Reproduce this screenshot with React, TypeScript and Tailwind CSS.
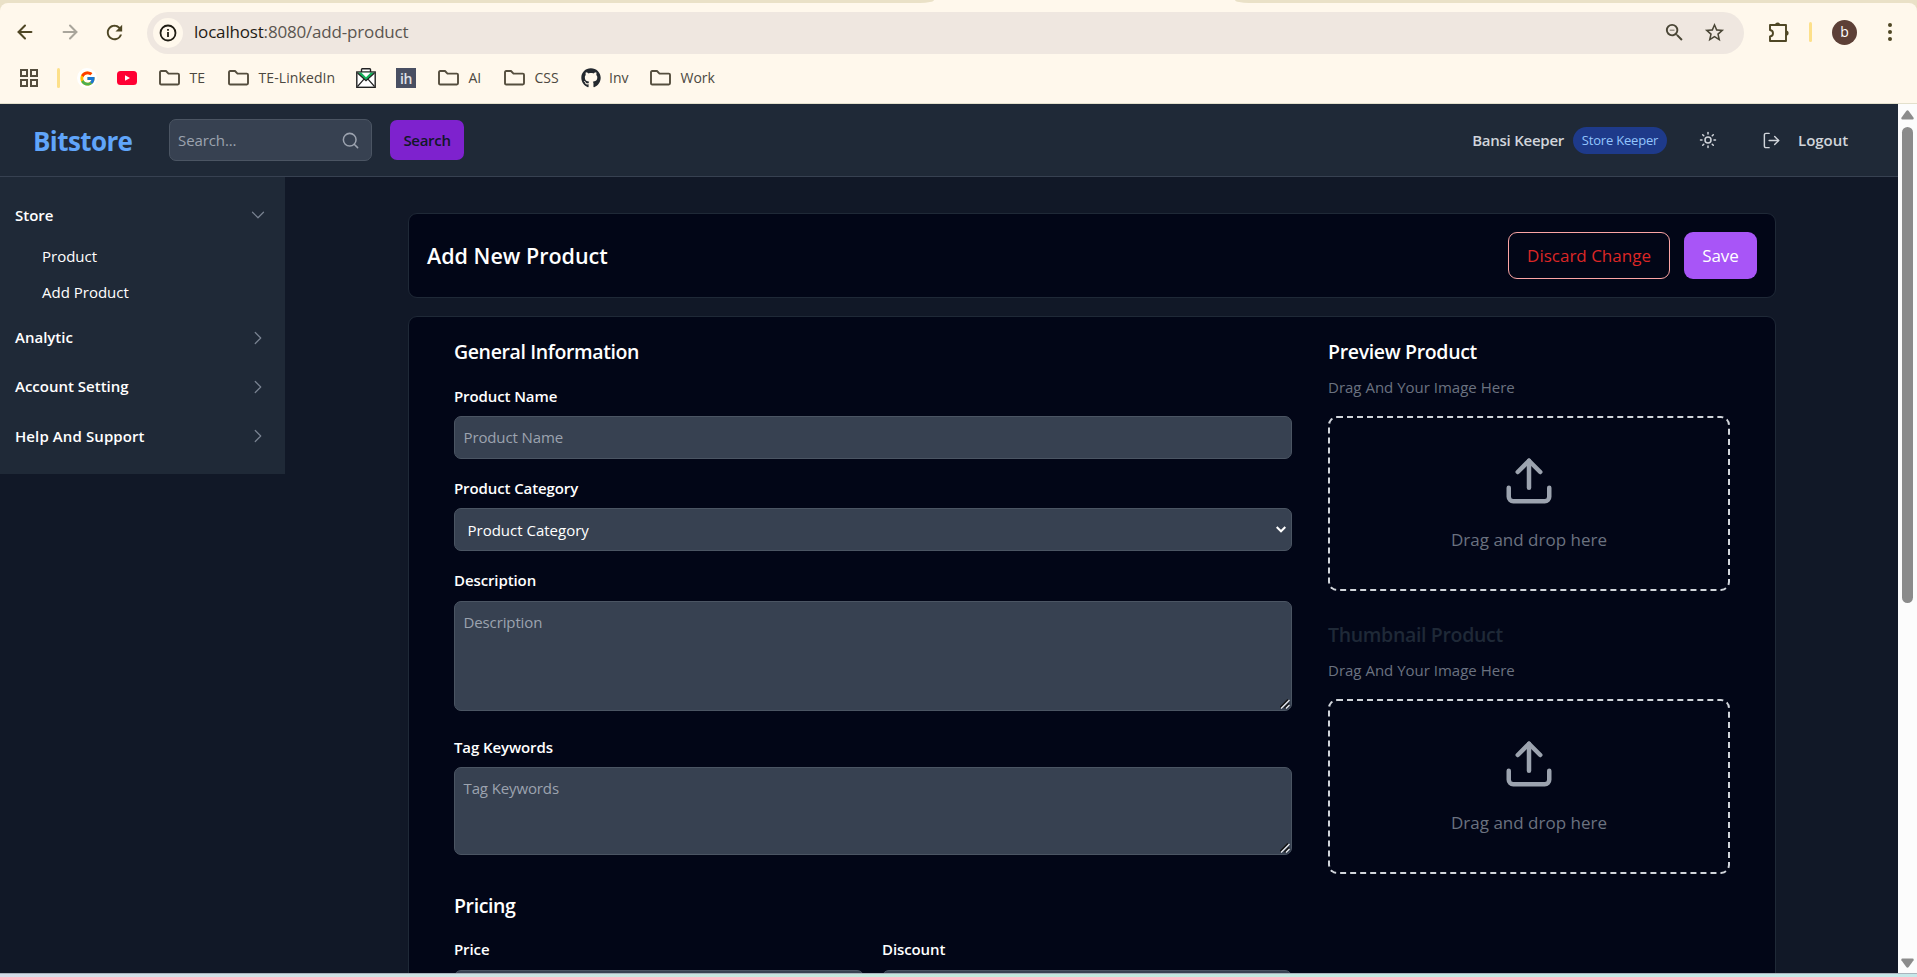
import React from "react";
import { ArrowLeft, ArrowRight, ChevronDown, ChevronRight, LogOut, Search, Sun, Upload } from "lucide-react";
import { FcGoogle } from "react-icons/fc";
import { FaGithub } from "react-icons/fa";
import { MdRefresh, MdZoomOut, MdStarBorder } from "react-icons/md";

function FolderIcon() {
  return (
    <svg width="21" height="16" viewBox="0 0 21 16" fill="none" stroke="#554e3e" strokeWidth="1.9" strokeLinejoin="round" className="shrink-0">
      <path d="M1 2.2Q1 1 2.2 1H7L9.5 3.6H18.8Q20 3.6 20 4.8V13.3Q20 14.5 18.8 14.5H2.2Q1 14.5 1 13.3Z" />
    </svg>
  );
}

function Folder({ label, className }: { label: string; className: string }) {
  return (
    <div className={`flex shrink-0 items-center gap-[9.5px] ${className}`}>
      <FolderIcon />
      <span className="pb-[2px] whitespace-nowrap">{label}</span>
    </div>
  );
}

function BrowserBar() {
  return (
    <div className="h-[104px] shrink-0 bg-[#eae1c7]">
      <div className="flex h-[3px] justify-between bg-[#fff8ec]">
        <div className="h-[3px] w-[934px] rounded-br-[14px_3px] bg-[#eae1c7]" />
        <div className="h-[3px] w-[682px] rounded-bl-[14px_3px] bg-[#eae1c7]" />
      </div>
      <div className="h-[101px] rounded-t-[8px] border-b border-[#e3e0cc] bg-[#fff8ec]">
        <div className="flex h-[58px] items-center">
          <ArrowLeft size={22} strokeWidth={2.2} color="#4f4725" className="ml-[14px] shrink-0" />
          <ArrowRight size={22} strokeWidth={2.2} color="#a9a59b" className="ml-[23px] shrink-0" />
          <MdRefresh size={23} color="#4f4725" className="ml-[22px] shrink-0" />
          <div className="mt-[1px] ml-[21px] flex h-[42px] w-[1597px] items-center rounded-full bg-[#efe7e0] pl-[6px]">
            <div className="flex size-[30px] shrink-0 items-center justify-center rounded-full bg-[#fff8ec]">
              <svg width="18" height="18" viewBox="0 0 18 18" fill="none" stroke="#1f1c13" strokeWidth="1.8">
                <circle cx="9" cy="9" r="7.5" />
                <path d="M9 8v5M9 5v1.8" />
              </svg>
            </div>
            <div className="ml-[11px] pb-[1px] text-[17px] tracking-[-0.18px] text-[#5b5650]">
              <span className="text-[#1f1b16]">localhost</span>:8080/add-product
            </div>
            <MdZoomOut size={23} color="#4a4636" className="ml-auto shrink-0" />
            <MdStarBorder size={23} color="#4a4636" className="mr-[18px] ml-[17px] shrink-0" />
          </div>
          <svg width="22" height="22" viewBox="0 0 22 22" fill="none" stroke="#4f4725" strokeWidth="1.9" strokeLinejoin="round" className="ml-[24px] shrink-0">
            <path d="M2 4H18V20H2V15.5C6 15 6 9.500 2 9Z" />
            <path d="M7 4a2.600 2.600 0 0 1 5.200 0ZM18 9.400a2.600 2.600 0 0 1 0 5.200Z" fill="#4f4725" stroke="none" />
          </svg>
          <div className="ml-[19px] h-5 w-[3px] rounded-full bg-[#fde08a]" />
          <div className="ml-[20px] flex size-[25px] items-center justify-center rounded-full bg-[#5d4037] pb-[1px] text-[14px] text-white">b</div>
          <div className="ml-[31px] flex flex-col gap-[3px]">
            <div className="size-1 rounded-full bg-[#4f4725]" />
            <div className="size-1 rounded-full bg-[#4f4725]" />
            <div className="size-1 rounded-full bg-[#4f4725]" />
          </div>
        </div>
        <div className="flex h-[34px] items-center text-[14px] text-[#4c4840]">
          <svg width="18" height="18" viewBox="0 0 18 18" fill="none" stroke="#554e3e" strokeWidth="2" className="ml-5 shrink-0">
            <path d="M1 1H7V7H1ZM11 1H17V7H11ZM1 11H7V17H1ZM11 11H17V17H11Z" />
          </svg>
          <div className="ml-[19px] h-5 w-[3px] shrink-0 rounded-full bg-[#fde08a]" />
          <div className="ml-[17px] flex size-5 shrink-0 items-center justify-center rounded-full bg-white">
            <FcGoogle size={17} />
          </div>
          <svg width="20" height="14" viewBox="0 0 20 14" className="ml-[20px] shrink-0">
            <rect width="20" height="14" rx="3.500" fill="#ff0033" />
            <path d="M8 4.200V9.800L13 7Z" fill="#fff" />
          </svg>
          <Folder label="TE" className="ml-[22px] w-[69px]" />
          <Folder label="TE-LinkedIn" className="w-[128px] tracking-[0.1px]" />
          <svg width="20" height="20" viewBox="0 0 20 20" className="shrink-0">
            <path d="M5.500 4V1.500Q5.500 .7 6.300 .7H13.700Q14.500 .7 14.500 1.500V4" fill="#fff" stroke="#222" strokeWidth="1.400" />
            <rect x=".8" y="4" width="18.400" height="15.300" fill="#fff" stroke="#222" strokeWidth="1.400" />
            <path d="M1.500 4.700H18.500L10 12.500Z" fill="#12b35a" />
            <path d="M5.500 4.700H14.500L10 9.200Z" fill="#fff" />
            <path d="M1.500 5L10 12.800L18.500 5M1.500 18.500L8 11.200M18.500 18.500L12 11.200" stroke="#222" strokeWidth="1.200" fill="none" />
          </svg>
          <div className="ml-5 flex size-5 shrink-0 items-center justify-center bg-[#494f62] text-[14px] font-semibold tracking-[-0.3px] text-[#dfe1e6]">ih</div>
          <Folder label="AI" className="ml-[22px] w-[66px]" />
          <Folder label="CSS" className="w-[77px]" />
          <FaGithub size={20} color="#24292f" className="shrink-0" />
          <span className="ml-[8px] w-[41px] pb-[2px]">Inv</span>
          <Folder label="Work" className="" />
        </div>
      </div>
    </div>
  );
}

function Header() {
  return (
    <header className="flex h-[73px] shrink-0 items-center border-b border-[#374151] bg-[#1f2937]">
      <div className="w-[135px] pt-[3px] pl-[33px] text-[26px] font-bold tracking-[-0.6px] text-[#60a5fa]">Bitstore</div>
      <div className="ml-[34px] flex h-[42px] w-[203px] items-center justify-between rounded-[7px] border border-[#4b5563] bg-[#374151] pr-[11px] pl-[8px]">
        <input placeholder="Search..." className="w-[140px] bg-transparent text-[15px] tracking-[-0.1px] outline-none placeholder:text-[#9ca3af]" />
        <Search size={19} strokeWidth={1.9} color="#9ca3af" />
      </div>
      <button className="ml-[18px] h-10 w-[74px] rounded-[7px] bg-[#7e22ce] text-[15px] font-semibold tracking-[-0.3px] text-[#111827]">Search</button>
      <div className="ml-auto text-[15px] font-semibold tracking-[-0.25px] text-[#d1d5db]">Bansi Keeper</div>
      <div className="ml-[9px] flex h-[27px] w-[94px] items-center justify-center rounded-full bg-[#1e3a8a] pt-[2px] text-[13px] tracking-[-0.2px] text-[#93c5fd]">Store Keeper</div>
      <Sun size={18} color="#d1d5db" className="ml-[32px]" />
      <LogOut size={19} strokeWidth={1.8} color="#d1d5db" className="ml-[45px]" />
      <div className="mr-[48px] ml-[17px] w-[52px] text-[15px] font-semibold text-[#d1d5db]">Logout</div>
    </header>
  );
}

function Sidebar() {
  return (
    <aside className="h-[297px] w-[285px] shrink-0 bg-[#1f2937] pt-[18px] pr-[16px] pl-[15px] text-[15px] text-white">
      <div className="flex h-[40px] items-center justify-between font-semibold">
        <span>Store</span>
        <ChevronDown size={22} strokeWidth={1.3} color="#7a8392" />
      </div>
      <div className="mt-[3px] flex h-9 items-center pl-[27px]">Product</div>
      <div className="flex h-9 items-center pl-[27px]">Add Product</div>
      <div className="mt-[3px] flex h-[49px] items-center justify-between font-semibold">
        <span>Analytic</span>
        <ChevronRight size={22} strokeWidth={1.3} color="#7a8392" />
      </div>
      <div className="flex h-[49px] items-center justify-between font-semibold">
        <span>Account Setting</span>
        <ChevronRight size={22} strokeWidth={1.3} color="#7a8392" />
      </div>
      <div className="flex h-[50px] items-center justify-between font-semibold">
        <span className="tracking-[0.1px]">Help And Support</span>
        <ChevronRight size={22} strokeWidth={1.3} color="#7a8392" />
      </div>
    </aside>
  );
}

function Label({ children }: { children: React.ReactNode }) {
  return <label className="block h-[24px] text-[15px] leading-[24px] font-semibold tracking-[-0.1px] text-white">{children}</label>;
}

function Dropzone() {
  return (
    <div className="flex h-[175px] w-[402px] flex-col items-center rounded-[9px] border-2 border-dashed border-[#d1d5db] pt-[36px]">
      <Upload size={54} color="#9ca3af" />
      <p className="mt-[19px] text-[17px] leading-[26px] text-[#6b7280]">Drag and drop here</p>
    </div>
  );
}

const field = "block w-full rounded-[7px] border border-[#4b5563] bg-[#374151] px-[8.5px] text-[15px] tracking-[-0.12px] text-white outline-none placeholder:text-[#9ca3af]";

function TextArea({ placeholder, className }: { placeholder: string; className: string }) {
  return (
    <div className="mt-[8px] grid">
      <textarea placeholder={placeholder} className={`col-start-1 row-start-1 resize-none pt-[9px] ${className} ${field}`} />
      <svg width="10" height="10" viewBox="0 0 10 10" fill="none" className="pointer-events-none col-start-1 row-start-1 mr-[2px] mb-[2px] self-end justify-self-end">
        <path d="M0 8.500L8 .5M4.500 9L9 4.500" stroke="#111" strokeWidth="1.500" />
        <path d="M1 9.500L9.500 1M6 9.500L9.500 6" stroke="#e5e7eb" strokeWidth="1.300" />
      </svg>
    </div>
  );
}

function ProductForm() {
  return (
    <section className="mt-[18px] flex h-[760px] w-[1368px] shrink-0 rounded-[9px] border border-[#1f2937] bg-[#020617] pt-[20px] pl-[45px]">
      <div className="w-[838px]">
        <h2 className="h-[30px] text-[19.500px] leading-[30px] font-semibold tracking-[-0.38px] text-white">General Information</h2>
        <div className="mt-[17px]">
          <Label>Product Name</Label>
          <input placeholder="Product Name" className={`mt-[8px] h-[43px] pb-[2px] ${field}`} />
        </div>
        <div className="mt-[17px]">
          <Label>Product Category</Label>
          <div className="mt-[8px] grid items-center">
            <select className="col-start-1 row-start-1 h-[43px] w-full appearance-none rounded-[7px] border border-[#4b5563] bg-[#374151] pt-[1px] pl-[12.5px] text-[15px] text-white outline-none">
              <option>Product Category</option>
            </select>
            <svg width="10" height="7" viewBox="0 0 10 7" fill="none" stroke="#fff" strokeWidth="2" className="pointer-events-none col-start-1 row-start-1 mr-[6px] justify-self-end">
              <path d="M.7 1L5 5.300L9.300 1" />
            </svg>
          </div>
        </div>
        <div className="mt-[17px]">
          <Label>Description</Label>
          <div className="pt-[1px]">
            <TextArea placeholder="Description" className="h-[110px]" />
          </div>
        </div>
        <div className="mt-[24px]">
          <Label>Tag Keywords</Label>
          <TextArea placeholder="Tag Keywords" className="h-[88px]" />
        </div>
        <h2 className="mt-[36px] h-[30px] text-[19.500px] leading-[30px] font-semibold tracking-[-0.38px] text-white">Pricing</h2>
        <div className="mt-[16px] grid grid-cols-2 gap-[18px]">
          <div>
            <Label>Price</Label>
            <input className={`mt-[9px] h-[43px] ${field}`} />
          </div>
          <div>
            <Label>Discount</Label>
            <input className={`mt-[9px] h-[43px] ${field}`} />
          </div>
        </div>
      </div>
      <div className="ml-[36px] w-[402px]">
        <h2 className="h-[30px] text-[19.500px] leading-[30px] font-semibold tracking-[-0.33px] text-white">Preview Product</h2>
        <p className="mt-[8px] h-[24px] text-[15px] leading-[24px] text-[#6b7280]">Drag And Your Image Here</p>
        <div className="mt-[17px]">
          <Dropzone />
        </div>
        <h2 className="mt-[29px] h-[30px] text-[19.500px] leading-[30px] font-semibold tracking-[-0.33px] text-[#1f2937]">Thumbnail Product</h2>
        <p className="mt-[8px] h-[24px] text-[15px] leading-[24px] text-[#6b7280]">Drag And Your Image Here</p>
        <div className="mt-[17px]">
          <Dropzone />
        </div>
      </div>
    </section>
  );
}

function Scrollbar() {
  return (
    <div className="flex h-full w-[19px] shrink-0 flex-col items-center bg-[#fcfcfc] pr-px">
      <svg width="13" height="10" viewBox="0 0 13 10" className="mt-[6px] shrink-0" fill="#8b8b8b">
        <path d="M5.300 1Q6.500 -.4 7.700 1L12.600 7.800Q13 9.500 11.500 9.500H1.500Q0 9.500 .4 7.800Z" />
      </svg>
      <div className="mt-[7px] h-[476px] w-[11px] rounded-full bg-[#8b8b8b]" />
      <svg width="13" height="10" viewBox="0 0 13 10" className="mt-auto mb-[5px] shrink-0" fill="#8b8b8b">
        <path d="M5.300 9Q6.500 10.400 7.700 9L12.600 2.200Q13 .5 11.500 .5H1.500Q0 .5 .4 2.200Z" />
      </svg>
    </div>
  );
}

export default function App() {
  return (
    <div className="flex h-[977px] w-[1917px] flex-col overflow-hidden bg-[#111827] [font-family:'Open_Sans','Noto_Sans',sans-serif]">
      <BrowserBar />
      <div className="flex h-[869px] shrink-0 overflow-hidden">
        <div className="flex h-full w-[1898px] flex-col overflow-hidden">
          <Header />
          <div className="flex">
            <Sidebar />
            <main className="ml-[123px] pt-[36px]">
              <section className="flex h-[85px] w-[1368px] items-center rounded-[9px] border border-[#1f2937] bg-[#020617] pr-[18px] pl-[18px]">
                <h1 className="pt-[2px] text-[21.500px] font-semibold text-white">Add New Product</h1>
                <button className="ml-auto h-[47px] w-[162px] rounded-[9px] border border-[#fca5a5] text-[17px] text-[#dc2626]">Discard Change</button>
                <button className="ml-[14px] h-[47px] w-[73px] rounded-[9px] bg-[#a855f7] text-[17px] tracking-[-0.1px] text-white">Save</button>
              </section>
              <ProductForm />
            </main>
          </div>
        </div>
        <Scrollbar />
      </div>
      <div className="h-1 shrink-0 border-t border-[#aab4bd] bg-linear-to-r from-[#d6dde9] via-[#c3e9dd] to-[#c6e8e9]" />
    </div>
  );
}
